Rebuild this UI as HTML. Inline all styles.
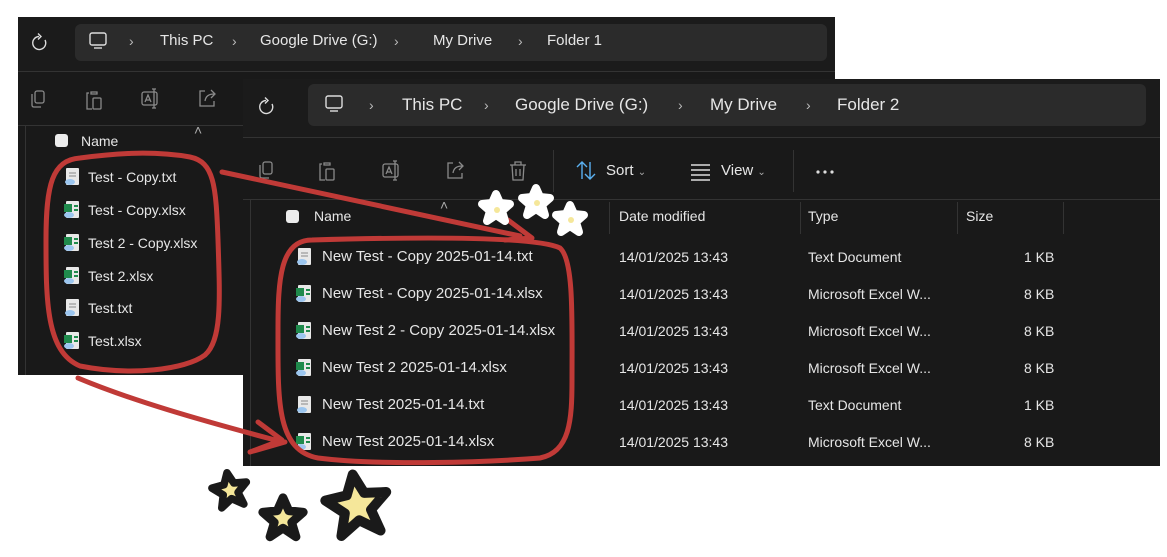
<!DOCTYPE html>
<html><head><meta charset="utf-8"><style>
*{margin:0;padding:0;box-sizing:border-box}
body{width:1167px;height:557px;background:#fff;position:relative;overflow:hidden;font-family:"Liberation Sans",sans-serif;color:#e8e8e8}
.w{position:absolute;background:#191919}
.t{position:absolute;font-size:15px;white-space:nowrap;color:#e6e6e6}
.s{font-size:14px}
.addr{position:absolute;background:#2b2b2b;border-radius:6px}
.ln{position:absolute;background:#333}
.cb{position:absolute;width:13px;height:13px;background:#ececec;border-radius:3px}
</style></head><body>
<div class="w" style="left:18px;top:17px;width:817px;height:358px">
  <div style="position:absolute;left:0;top:0;width:817px;height:55px;background:#1b1b1b"></div>
  <div class="ln" style="left:0;top:54px;width:817px;height:1px"></div>
  <div class="addr" style="left:57px;top:7px;width:752px;height:37px"></div>
  <div class="ln" style="left:0;top:108px;width:225px;height:1px"></div>
  <div class="ln" style="left:7px;top:108px;width:1px;height:250px"></div>
  <div class="cb" style="left:37px;top:117px"></div>
</div>
<div class="t s" style="left:129px;top:33px;color:#bbb">›</div>
<div class="t" style="left:160px;top:32px">This PC</div>
<div class="t s" style="left:232px;top:33px;color:#bbb">›</div>
<div class="t" style="left:260px;top:32px">Google Drive (G:)</div>
<div class="t s" style="left:394px;top:33px;color:#bbb">›</div>
<div class="t" style="left:433px;top:32px">My Drive</div>
<div class="t s" style="left:518px;top:33px;color:#bbb">›</div>
<div class="t" style="left:547px;top:32px">Folder 1</div>
<div class="t s" style="left:81px;top:133px">Name</div>
<div class="t s" style="left:194px;top:122px;color:#aaa">˄</div>
<div class="t s" style="left:88px;top:169px">Test - Copy.txt</div>
<div class="t s" style="left:88px;top:202px">Test - Copy.xlsx</div>
<div class="t s" style="left:88px;top:235px">Test 2 - Copy.xlsx</div>
<div class="t s" style="left:88px;top:268px">Test 2.xlsx</div>
<div class="t s" style="left:88px;top:300px">Test.txt</div>
<div class="t s" style="left:88px;top:333px">Test.xlsx</div>

<div class="w" style="left:243px;top:79px;width:917px;height:387px">
  <div style="position:absolute;left:0;top:0;width:917px;height:59px;background:#1b1b1b"></div>
  <div class="ln" style="left:0;top:58px;width:917px;height:1px"></div>
  <div class="addr" style="left:65px;top:5px;width:838px;height:42px"></div>
  <div class="ln" style="left:310px;top:71px;width:1px;height:42px"></div>
  <div class="ln" style="left:550px;top:71px;width:1px;height:42px"></div>
  <div class="ln" style="left:0;top:120px;width:917px;height:1px"></div>
  <div class="ln" style="left:7px;top:120px;width:1px;height:267px"></div>
  <div class="ln" style="left:366px;top:123px;width:1px;height:32px"></div>
  <div class="ln" style="left:557px;top:123px;width:1px;height:32px"></div>
  <div class="ln" style="left:714px;top:123px;width:1px;height:32px"></div>
  <div class="ln" style="left:820px;top:123px;width:1px;height:32px"></div>
  <div class="cb" style="left:43px;top:131px"></div>
</div>
<div class="t s" style="left:369px;top:97px;color:#bbb">›</div>
<div class="t" style="left:402px;top:95px;font-size:17px">This PC</div>
<div class="t s" style="left:484px;top:97px;color:#bbb">›</div>
<div class="t" style="left:515px;top:95px;font-size:17px">Google Drive (G:)</div>
<div class="t s" style="left:678px;top:97px;color:#bbb">›</div>
<div class="t" style="left:710px;top:95px;font-size:17px">My Drive</div>
<div class="t s" style="left:806px;top:97px;color:#bbb">›</div>
<div class="t" style="left:837px;top:95px;font-size:17px">Folder 2</div>
<div class="t" style="left:606px;top:162px">Sort <span style="font-size:10px;color:#aaa">⌄</span></div>
<div class="t" style="left:721px;top:162px">View <span style="font-size:10px;color:#aaa">⌄</span></div>
<div class="t s" style="left:314px;top:208px">Name</div>
<div class="t s" style="left:440px;top:197px;color:#aaa">˄</div>
<div class="t s" style="left:619px;top:208px">Date modified</div>
<div class="t s" style="left:808px;top:208px">Type</div>
<div class="t s" style="left:966px;top:208px">Size</div>
<div style="position:absolute;left:0;top:248px">
<div class="t" style="left:322px;top:0">New Test - Copy 2025-01-14.txt</div><div class="t s" style="left:619px;top:1px">14/01/2025 13:43</div><div class="t s" style="left:808px;top:1px">Text Document</div><div class="t s" style="left:1024px;top:1px">1 KB</div>
<div class="t" style="left:322px;top:37px">New Test - Copy 2025-01-14.xlsx</div><div class="t s" style="left:619px;top:38px">14/01/2025 13:43</div><div class="t s" style="left:808px;top:38px">Microsoft Excel W...</div><div class="t s" style="left:1024px;top:38px">8 KB</div>
<div class="t" style="left:322px;top:74px">New Test 2 - Copy 2025-01-14.xlsx</div><div class="t s" style="left:619px;top:75px">14/01/2025 13:43</div><div class="t s" style="left:808px;top:75px">Microsoft Excel W...</div><div class="t s" style="left:1024px;top:75px">8 KB</div>
<div class="t" style="left:322px;top:111px">New Test 2 2025-01-14.xlsx</div><div class="t s" style="left:619px;top:112px">14/01/2025 13:43</div><div class="t s" style="left:808px;top:112px">Microsoft Excel W...</div><div class="t s" style="left:1024px;top:112px">8 KB</div>
<div class="t" style="left:322px;top:148px">New Test 2025-01-14.txt</div><div class="t s" style="left:619px;top:149px">14/01/2025 13:43</div><div class="t s" style="left:808px;top:149px">Text Document</div><div class="t s" style="left:1024px;top:149px">1 KB</div>
<div class="t" style="left:322px;top:185px">New Test 2025-01-14.xlsx</div><div class="t s" style="left:619px;top:186px">14/01/2025 13:43</div><div class="t s" style="left:808px;top:186px">Microsoft Excel W...</div><div class="t s" style="left:1024px;top:186px">8 KB</div>
</div>
<svg width="1167" height="557" style="position:absolute;left:0;top:0">
<defs>
<g id="doc"><rect x="0" y="0" width="13" height="17" fill="#e8e8e8" rx="1"/><line x1="3" y1="5" x2="10" y2="5" stroke="#888"/><line x1="3" y1="8" x2="10" y2="8" stroke="#888"/><ellipse cx="4" cy="14" rx="5" ry="3" fill="#9cc6ef"/></g>
<g id="xl"><rect x="2" y="0" width="13" height="17" fill="#e8e8e8" rx="1"/><rect x="0" y="3" width="8" height="8" fill="#1f8a4c"/><line x1="10" y1="5" x2="14" y2="5" stroke="#1f8a4c" stroke-width="2"/><line x1="10" y1="9" x2="14" y2="9" stroke="#1f8a4c" stroke-width="2"/><ellipse cx="5" cy="14" rx="5" ry="3" fill="#9cc6ef"/></g>
<g id="st"><path d="M0,-14 L4,-5 L14,-4 L6,3 L9,13 L0,7 L-9,13 L-6,3 L-14,-4 L-4,-5Z"/></g>
<g id="refresh"><path d="M6,-3 A6.5,6.5 0 1 1 0,-6.5" fill="none" stroke="#ddd" stroke-width="1.4"/><path d="M-1,-9.5 L2,-6.5 L-1,-3.5" fill="none" stroke="#ddd" stroke-width="1.4"/></g>
<g id="pc"><rect x="-8" y="-8" width="16" height="12" rx="2" fill="none" stroke="#ddd" stroke-width="1.4"/><line x1="-4" y1="7" x2="4" y2="7" stroke="#ddd" stroke-width="1.4"/></g>
<g id="copy" fill="none" stroke="#8a8a8a" stroke-width="1.3"><rect x="-3" y="-8" width="9" height="12" rx="2"/><path d="M-6,-5 L-6,6 Q-6,8 -4,8 L3,8"/></g>
<g id="paste" fill="none" stroke="#8a8a8a" stroke-width="1.3"><path d="M-3,-8 L3,-8 L3,-6 L-3,-6Z"/><path d="M-5,-7 L-7,-7 L-7,9 L-2,9"/><rect x="-1" y="-2" width="8" height="11" rx="1"/></g>
<g id="ren" fill="none" stroke="#8a8a8a" stroke-width="1.3"><rect x="-9" y="-7" width="15" height="13" rx="2"/><path d="M-6,3 L-3,-4 L0,3 M-5,1 L-1,1"/><path d="M3,-10 L3,9 M1,-10 L5,-10 M1,9 L5,9"/></g>
<g id="share" fill="none" stroke="#8a8a8a" stroke-width="1.3"><path d="M-2,-7 L-7,-7 L-7,8 L7,8 L7,3"/><path d="M-2,3 Q-1,-4 7,-4 M4,-8 L8,-4 L4,0"/></g>
<g id="trash" fill="none" stroke="#8a8a8a" stroke-width="1.3"><path d="M-8,-6 L8,-6 M-3,-6 L-3,-9 L3,-9 L3,-6 M-6,-6 L-5,9 L5,9 L6,-6 M-2,-2 L-2,5 M2,-2 L2,5"/></g>
</defs>
<use href="#refresh" x="39" y="43"/><use href="#pc" x="98" y="41"/>
<use href="#copy" x="38" y="99"/><use href="#paste" x="94" y="100"/><use href="#ren" x="151" y="99"/><use href="#share" x="207" y="98"/>
<use href="#refresh" x="266" y="107" transform="scale(1)"/><use href="#pc" x="334" y="104"/>
<use href="#copy" x="266" y="170"/><use href="#paste" x="327" y="171"/><use href="#ren" x="392" y="171"/><use href="#share" x="455" y="170"/><use href="#trash" x="518" y="171"/>
<g fill="none" stroke="#5ab0f0" stroke-width="1.4"><path d="M582,179 L582,162 M577,167 L582,162 L587,167"/><path d="M590,162 L590,179 M585,174 L590,179 L595,174"/></g>
<g stroke="#ddd" stroke-width="1.4"><line x1="691" y1="165" x2="710" y2="165"/><line x1="691" y1="170" x2="710" y2="170"/><line x1="691" y1="175" x2="710" y2="175"/><line x1="691" y1="180" x2="710" y2="180"/></g>
<g fill="#ddd"><circle cx="818" cy="172" r="1.6"/><circle cx="825" cy="172" r="1.6"/><circle cx="832" cy="172" r="1.6"/></g>
<use href="#doc" x="66" y="168"/><use href="#xl" x="64" y="201"/><use href="#xl" x="64" y="234"/><use href="#xl" x="64" y="267"/><use href="#doc" x="66" y="299"/><use href="#xl" x="64" y="332"/>
<use href="#doc" x="298" y="248"/><use href="#xl" x="296" y="285"/><use href="#xl" x="296" y="322"/><use href="#xl" x="296" y="359"/><use href="#doc" x="298" y="396"/><use href="#xl" x="296" y="433"/>
<g fill="none" stroke="#c03a37" stroke-width="5" stroke-linecap="round" stroke-linejoin="round">
<path d="M80,158 C52,160 46,185 46,240 C46,300 46,352 80,366 C130,376 185,370 205,355 C222,340 220,300 218,240 C216,185 214,162 190,157 C150,150 110,154 80,158Z"/>
<path d="M312,240 C280,240 278,280 278,330 C278,400 276,450 318,458 C380,466 490,462 540,458 C570,452 572,420 572,380 C572,320 574,260 560,248 C540,238 450,236 312,240Z"/>
<path d="M222,172 L520,236 M508,220 L532,238 L505,240"/>
<path d="M78,378 C130,400 200,420 275,440 M258,422 L282,440 L250,452 L285,442"/>
</g>
<g fill="#fff" stroke="#fff" stroke-width="8" stroke-linejoin="round">
<use href="#st" x="496" y="208"/><use href="#st" x="536" y="202"/><use href="#st" x="570" y="219"/>
</g>
<g fill="#f5e79a"><circle cx="497" cy="210" r="3"/><circle cx="537" cy="203" r="3"/><circle cx="571" cy="220" r="3"/></g>
<g fill="#f5e79a" stroke="#1a1a1a" stroke-linejoin="round">
<g transform="translate(230,490) rotate(-10) scale(1.25)" stroke-width="6"><use href="#st"/></g>
<g transform="translate(283,518) scale(1.45)" stroke-width="6"><use href="#st"/></g>
<g transform="translate(357,505) rotate(-8) scale(2.2)" stroke-width="4.5"><use href="#st"/></g>
</g>
</svg>
</body></html>
